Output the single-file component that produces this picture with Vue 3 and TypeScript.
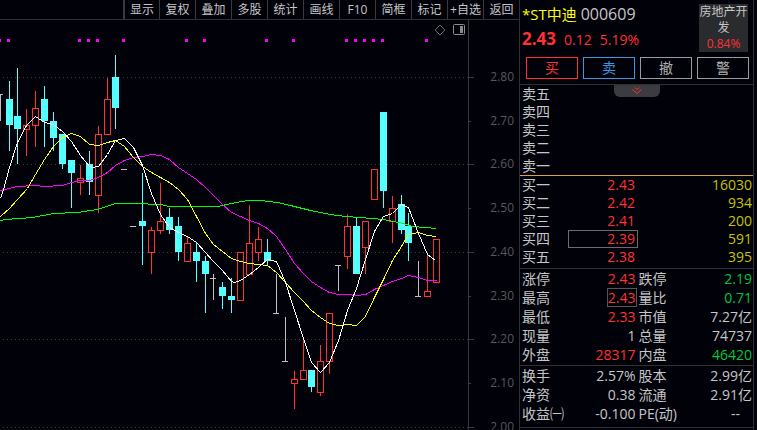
<script setup lang="ts">
import { ref } from 'vue'

type Kind = 'up' | 'down' | 'flat'
type Tone = 'red' | 'green' | 'plain'

interface Candle {
  x: number
  top: number
  bottom: number
  high: number
  low: number
  kind: Kind
}

interface Stat {
  label: string
  value: string
  tone: Tone
  boxed?: boolean
}

const tools: string[] = ['显示', '复权', '叠加', '多股', '统计', '画线', 'F10', '简框', '标记', '+自选', '返回']

const c = (kind: Kind, x: number, top: number, bottom: number, high = top, low = bottom): Candle => ({
  kind, x, top, bottom, high, low,
})

const candles: Candle[] = [
  c('flat', 0, 94, 94, 94, 120),
  c('down', 9, 99, 124, 81, 150),
  c('down', 17, 116, 128, 68, 163),
  c('up', 26, 125, 129, 109, 155),
  c('up', 35, 108, 125, 91, 146),
  c('down', 44, 99, 120, 86, 146),
  c('down', 53, 121, 137, 112, 150),
  c('down', 62, 134, 163, 134, 168),
  c('down', 71, 160, 172, 160, 207),
  c('up', 80, 178, 182, 165, 194),
  c('down', 89, 164, 181, 151, 194),
  c('up', 98, 134, 195, 126, 212),
  c('up', 107, 99, 134, 78),
  c('down', 115, 77, 107, 55, 128),
  c('flat', 124, 169, 169),
  c('flat', 133, 226, 226),
  c('down', 142, 221, 225, 173, 264),
  c('up', 151, 230, 252, 227, 273),
  c('up', 160, 221, 230, 183, 233),
  c('down', 169, 217, 229, 208, 233),
  c('down', 178, 226, 251, 217, 260),
  c('up', 187, 243, 261, 236),
  c('down', 196, 252, 260, 243, 281),
  c('down', 205, 261, 273, 256, 312),
  c('flat', 213, 278, 278, 274, 299),
  c('down', 222, 287, 295, 282, 308),
  c('down', 231, 296, 299, 278, 312),
  c('up', 240, 252, 300),
  c('up', 249, 243, 274, 205),
  c('up', 258, 239, 252, 227, 260),
  c('down', 267, 252, 260, 239, 264),
  c('flat', 276, 313, 313, 274, 313),
  c('flat', 285, 361, 361, 317, 361),
  c('up', 294, 379, 383, 371, 408),
  c('up', 303, 370, 379, 340),
  c('down', 311, 370, 386, 370, 391),
  c('up', 320, 361, 392, 345, 395),
  c('up', 329, 313, 361, 313, 373),
  c('flat', 338, 265, 265, 265, 290),
  c('up', 347, 226, 256, 214, 268),
  c('down', 356, 226, 273, 218),
  c('up', 365, 221, 247, 221, 273),
  c('up', 374, 169, 199),
  c('down', 383, 112, 190, 112, 207),
  c('up', 392, 208, 221, 196, 242),
  c('down', 401, 204, 229, 195, 233),
  c('down', 408, 226, 242, 213, 260),
  c('flat', 418, 296, 296, 261, 296),
  c('up', 427, 291, 296, 255),
  c('up', 436, 239, 282),
]

const averages: { name: string; points: string }[] = [
  { name: 'ma60', points: '0,220 5,219 32,217 53,213 77,212 97,209 115,203 143,203 151,204 160,204 169,206 217,206 231,203 247,200 260,200 277,202 290,205 310,210 330,214 345,216 360,217 383,219 403,223 412,226 436,228' },
  { name: 'ma20', points: '0,190 17,186 35,185 44,186 62,185 71,182 80,180 89,180 98,177 107,172 115,165 124,160 133,157 142,156 151,154 160,155 169,159 178,167 187,173 196,179 205,187 213,195 222,204 231,212 240,216 249,220 258,223 267,228 276,236 285,249 294,263 303,273 311,281 320,287 329,292 338,294 347,294 356,295 365,294 374,289 383,285 392,281 401,278 408,275 418,277 427,280 436,280' },
  { name: 'ma10', points: '0,216 9,208 17,199 27,188 35,174 44,159 53,146 62,137 71,133 80,136 89,144 98,145 107,142 115,140 124,146 133,157 142,166 151,172 160,177 169,182 178,189 187,199 196,216 205,233 213,244 222,251 231,258 240,261 249,263 258,264 267,265 276,272 285,282 294,292 303,301 311,310 320,317 329,323 338,325 347,324 356,325 365,316 374,297 383,279 392,260 401,246 408,234 418,232 427,235 436,236' },
  { name: 'ma5', points: '0,198 3,189 9,167 17,142 26,125 35,116 44,122 53,124 62,131 71,141 80,155 89,166 92,167 98,166 107,154 115,140 124,138 133,147 142,165 151,193 160,214 169,227 178,232 187,236 196,242 205,252 213,261 222,270 231,281 234,282 240,280 249,274 258,267 267,259 276,261 285,282 294,310 303,338 311,362 320,372 329,362 338,340 347,310 356,288 365,259 374,231 383,216 392,213 401,204 408,207 418,233 427,254 435,260' },
]

const signals: number[] = [-1, 8, 79, 88, 97, 123, 186, 204, 266, 293, 346, 355, 364, 373, 382, 426]

const priceTicks: { price: string; y: number; major: boolean }[] = [
  { price: '2.80', y: 77, major: true },
  { price: '2.70', y: 121, major: false },
  { price: '2.60', y: 164, major: true },
  { price: '2.50', y: 208, major: false },
  { price: '2.40', y: 252, major: true },
  { price: '2.30', y: 296, major: false },
  { price: '2.20', y: 339, major: true },
  { price: '2.10', y: 383, major: false },
  { price: '2.00', y: 427, major: true },
]

const asks: string[] = ['卖五', '卖四', '卖三', '卖二', '卖一']
const bids: { label: string; price: string; volume: string }[] = [
  { label: '买一', price: '2.43', volume: '16030' },
  { label: '买二', price: '2.42', volume: '934' },
  { label: '买三', price: '2.41', volume: '200' },
  { label: '买四', price: '2.39', volume: '591' },
  { label: '买五', price: '2.38', volume: '395' },
]
const selected = ref('买四')

const trading: [Stat, Stat][] = [
  [{ label: '涨停', value: '2.43', tone: 'red' }, { label: '跌停', value: '2.19', tone: 'green' }],
  [{ label: '最高', value: '2.43', tone: 'red', boxed: true }, { label: '量比', value: '0.71', tone: 'green' }],
  [{ label: '最低', value: '2.33', tone: 'red' }, { label: '市值', value: '7.27亿', tone: 'plain' }],
  [{ label: '现量', value: '1', tone: 'plain' }, { label: '总量', value: '74737', tone: 'plain' }],
  [{ label: '外盘', value: '28317', tone: 'red' }, { label: '内盘', value: '46420', tone: 'green' }],
]
const fundamentals: [Stat, Stat][] = [
  [{ label: '换手', value: '2.57%', tone: 'plain' }, { label: '股本', value: '2.99亿', tone: 'plain' }],
  [{ label: '净资', value: '0.38', tone: 'plain' }, { label: '流通', value: '2.91亿', tone: 'plain' }],
  [{ label: '收益㈠', value: '-0.100', tone: 'plain' }, { label: 'PE(动)', value: '--', tone: 'plain' }],
]
const statGroups = [trading, fundamentals]
</script>

<template>
  <div class="terminal">
    <main class="chart-pane">
      <nav class="toolbar">
        <button v-for="tool in tools" :key="tool" type="button" class="tool">{{ tool }}</button>
      </nav>
      <div class="chart-wrap">
        <svg class="chart" viewBox="0 20 519 410" role="img" aria-label="K线图">
          <g v-for="tick in priceTicks" :key="tick.price">
            <line v-if="tick.major" class="grid" x1="3" x2="468" :y1="tick.y + 0.5" :y2="tick.y + 0.5" />
            <line class="axis" x1="468" :x2="tick.major ? 474 : 471" :y1="tick.y + 0.5" :y2="tick.y + 0.5" />
            <text class="price" x="514" :y="tick.y + 4" text-anchor="end">{{ tick.price }}</text>
          </g>
          <line class="axis" x1="468.5" x2="468.5" y1="20" y2="430" />
          <rect v-for="x in signals" :key="x" class="signal" :x="x - 1" y="39" width="3" height="3" />
          <g v-for="k in candles" :key="k.x" :class="k.kind">
            <template v-if="k.kind === 'up'">
              <rect v-if="k.high < k.top" class="wick" :x="k.x" :y="k.high" width="1" :height="k.top - k.high" />
              <rect v-if="k.low > k.bottom" class="wick" :x="k.x" :y="k.bottom + 1" width="1" :height="k.low - k.bottom" />
              <rect class="body" :x="k.x - 2.5" :y="k.top + 0.5" width="6" :height="k.bottom - k.top" />
            </template>
            <template v-else-if="k.kind === 'down'">
              <rect class="wick" :x="k.x" :y="k.high" width="1" :height="k.low - k.high + 1" />
              <rect class="body" :x="k.x - 3" :y="k.top" width="7" :height="k.bottom - k.top + 1" />
            </template>
            <template v-else>
              <rect class="wick" :x="k.x" :y="k.high" width="1" :height="k.low - k.high + 1" />
              <rect class="body" :x="k.x - 3" :y="k.top" width="6" height="1" />
            </template>
          </g>
          <g transform="translate(0.5 0.5)">
            <polyline v-for="ma in averages" :key="ma.name" class="ma" :class="ma.name" :points="ma.points" />
          </g>
        </svg>
        <div class="chart-icons">
          <button type="button" class="icon" aria-label="标记点">
            <svg width="12" height="12" viewBox="0 0 12 12"><path class="outline" d="M6 1 L11 6 L6 11 L1 6 Z" /></svg>
          </button>
          <button type="button" class="icon" aria-label="侧栏">
            <svg width="12" height="12" viewBox="0 0 12 12">
              <rect class="frame" x="0.5" y="0.5" width="11" height="10" rx="1" />
              <rect class="fill" x="7" y="2" width="3" height="7" />
            </svg>
          </button>
        </div>
      </div>
    </main>

    <aside class="quote">
      <header class="summary">
        <div class="identity">
          <h1 class="title"><span class="name">*ST中迪</span> <span class="code">000609</span></h1>
          <p class="last"><strong>2.43</strong><span>0.12</span><span>5.19%</span></p>
        </div>
        <a class="sector" href="#">房地产开发<span class="sector-change">0.84%</span></a>
      </header>
      <div class="actions">
        <button type="button" class="action buy">买</button>
        <button type="button" class="action sell">卖</button>
        <button type="button" class="action">撤</button>
        <button type="button" class="action">警</button>
      </div>

      <section class="asks">
        <button type="button" class="expand" aria-label="展开">
          <svg width="10" height="8" viewBox="0 0 10 8">
            <path d="M3 0.5 L5 2.5 L7 0.5 M0.5 2.5 L5 6.5 L9.5 2.5" />
          </svg>
        </button>
        <table class="book">
          <tbody>
            <tr v-for="ask in asks" :key="ask"><th scope="row">{{ ask }}</th><td></td><td></td></tr>
          </tbody>
        </table>
      </section>

      <section class="bids">
        <table class="book">
          <tbody>
            <tr v-for="bid in bids" :key="bid.label" @click="selected = bid.label">
              <th scope="row">{{ bid.label }}</th>
              <td class="red"><span class="level" :class="{ selected: selected === bid.label }">{{ bid.price }}</span></td>
              <td class="volume">{{ bid.volume }}</td>
            </tr>
          </tbody>
        </table>
      </section>

      <section v-for="(group, g) in statGroups" :key="g" class="stats">
        <table>
          <tbody>
            <tr v-for="pair in group" :key="pair[0].label">
              <template v-for="stat in pair" :key="stat.label">
                <th scope="row">{{ stat.label }}</th>
                <td :class="stat.tone"><span class="figure" :class="{ boxed: stat.boxed, empty: stat.value === '--' }">{{ stat.value }}</span></td>
              </template>
            </tr>
          </tbody>
        </table>
      </section>
    </aside>
  </div>
</template>

<style>
body {
  background: #010109;
}
</style>

<style scoped>
.terminal {
  display: grid;
  grid-template-columns: minmax(0, 1fr) 235px;
  padding-right: 3px;
  min-height: 100vh;
  overflow: hidden;
  background: #010109;
  color: #c6c6c6;
  font-family: "Open Sans", "Noto Sans CJK SC", sans-serif;
  font-size: 14px;
}

button {
  margin: 0;
  padding: 0;
  border: 0;
  background: none;
  color: inherit;
  font: inherit;
  cursor: pointer;
}

.toolbar {
  display: flex;
  justify-content: flex-end;
  height: 19px;
  border-bottom: 1px solid #303030;
}

.tool {
  box-sizing: border-box;
  width: 36px;
  border-left: 1px solid #3a3a3a;
  font-size: 12px;
  line-height: 18px;
  white-space: nowrap;
}

.tool:first-child {
  border-left-width: 2px;
}

.chart-wrap {
  position: relative;
}

.chart {
  display: block;
  width: 100%;
  height: auto;
  shape-rendering: crispEdges;
}

.grid {
  stroke: #393939;
  stroke-dasharray: 1 3;
}

.axis {
  stroke: #393939;
}

.price {
  fill: #585858;
  font-size: 12px;
}

.signal {
  fill: #ff00ff;
}

.up .wick {
  fill: #ff3232;
}

.up .body {
  fill: none;
  stroke: #ff3232;
}

.down {
  fill: #54ffff;
}

.flat {
  fill: #c0c0c0;
}

.ma {
  fill: none;
}

.ma5 {
  stroke: #ffffff;
}

.ma10 {
  stroke: #ffff00;
}

.ma20 {
  stroke: #ff00ff;
}

.ma60 {
  stroke: #00ff00;
}

.chart-icons {
  position: absolute;
  top: 4px;
  right: 54px;
  display: flex;
  gap: 7px;
}

.icon svg {
  display: block;
}

.outline {
  fill: none;
  stroke: #6a6a6a;
}

.frame {
  fill: none;
  stroke: #8c8c8c;
}

.fill {
  fill: #8c8c8c;
}

.quote {
  border: solid #303030;
  border-width: 0 1px;
}

.summary {
  display: flex;
  justify-content: space-between;
  padding: 4px 5px 0 2px;
}

.title {
  margin: 0;
  font-size: 15px;
  font-weight: 400;
  line-height: 20px;
}

.name {
  color: #ffff00;
}

.code {
  font-size: 16px;
}

.last {
  display: flex;
  align-items: baseline;
  gap: 8px;
  margin: 3px 0 0;
  color: #ff3232;
  line-height: 24px;
}

.last strong {
  font-size: 17px;
}

.sector {
  box-sizing: border-box;
  width: 49px;
  height: 48px;
  background: #2a2b2e;
  color: #c6c6c6;
  font-size: 12px;
  line-height: 16px;
  text-align: center;
  text-decoration: none;
}

.sector-change {
  display: block;
  color: #ff3232;
}

.actions {
  display: grid;
  grid-template-columns: repeat(4, 1fr);
  gap: 5px;
  padding: 5px 4px 5px 6px;
}

.action {
  box-sizing: border-box;
  height: 22px;
  border: 1px solid #9a9a9a;
  color: #b0b0b0;
  line-height: 20px;
}

.buy {
  border-color: #ff3232;
  color: #ff3232;
}

.sell {
  border-color: #3c96e0;
  color: #3c96e0;
}

.asks {
  position: relative;
  border-top: 1px solid #303030;
}

.expand {
  position: absolute;
  top: 0;
  left: 50%;
  width: 46px;
  height: 12px;
  margin-left: -23px;
  border-radius: 0 0 6px 6px;
  background: #3b3b41;
}

.expand svg {
  display: block;
  margin: 0 auto;
  fill: none;
  stroke: #ff3232;
}

.bids {
  padding-bottom: 2px;
  border-top: 1px solid #e0a040;
}

.stats {
  padding-bottom: 1px;
  border-top: 1px solid #303030;
}

.stats:last-child {
  padding-bottom: 4px;
  border-bottom: 1px solid #303030;
}

table {
  width: 100%;
  border-collapse: collapse;
  table-layout: fixed;
}

th,
td {
  height: 19px;
  padding: 0;
  line-height: 19px;
  white-space: nowrap;
}

.book th,
.book td {
  height: 18px;
  line-height: 18px;
}

th {
  width: 46px;
  padding-left: 2px;
  font-weight: 400;
  text-align: left;
}

td {
  text-align: right;
}

.book td:nth-child(2) {
  width: 70px;
}

.level {
  display: block;
  padding-right: 3px;
}

.selected {
  padding-right: 2px;
  line-height: 16px;
  border: 1px solid #6c6c6c;
}

.volume {
  padding-right: 1px;
  color: #c4c400;
}

.figure {
  display: inline-block;
  padding-right: 1px;
}

.boxed {
  line-height: 17px;
  border: 1px solid #565656;
  border-right-width: 1px;
  padding: 0;
}

.empty {
  padding-right: 13px;
}

.red {
  color: #ff3232;
}

.green {
  color: #00c83c;
}
</style>
